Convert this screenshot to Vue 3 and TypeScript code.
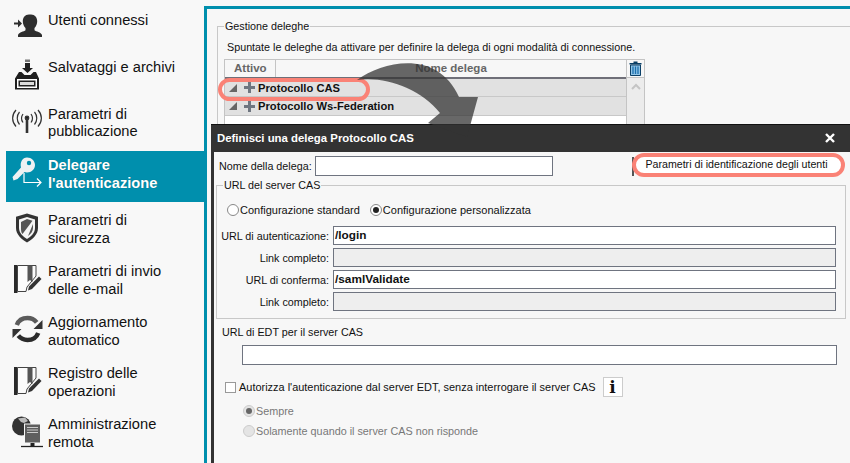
<script setup lang="ts">
interface NavItem { lines: string[]; icon: string; cls: string; active?: boolean }
const items: NavItem[] = [
  { lines: ['Utenti connessi'], icon: 'user', cls: 'first' },
  { lines: ['Salvataggi e archivi'], icon: 'save', cls: 'second' },
  { lines: ['Parametri di', 'pubblicazione'], icon: 'antenna', cls: 'pub' },
  { lines: ['Delegare', "l'autenticazione"], icon: 'key', cls: '', active: true },
  { lines: ['Parametri di', 'sicurezza'], icon: 'shield', cls: 'low' },
  { lines: ['Parametri di invio', 'delle e-mail'], icon: 'book', cls: 'low' },
  { lines: ['Aggiornamento', 'automatico'], icon: 'sync', cls: 'low' },
  { lines: ['Registro delle', 'operazioni'], icon: 'book', cls: 'low' },
  { lines: ['Amministrazione', 'remota'], icon: 'remote', cls: 'low' },
]
</script>

<template>
  <div class="page">
    <aside class="side">
      <div v-for="it in items" :key="it.lines[0] + it.icon" class="nav" :class="[it.cls, { active: it.active }]">
        <svg class="ico" :class="'i-' + it.icon" width="34" height="34" viewBox="0 0 34 34">
          <g v-if="it.icon === 'user'" fill="#2e2e2e">
            <path d="M18 5.500c4 0 6.200 3 6.200 6.800 0 2.800-1.100 5.200-2.700 6.700v2.300c1.500 1.300 6.500 1.900 7.500 4.700v2H5v-2c1-2.800 6-3.400 7.500-4.700V19c-1.600-1.500-2.700-3.900-2.700-6.700 0-3.800 2.200-6.800 6.200-6.800z" transform="translate(1 0)" />
            <path d="M2 13.500h4v-3l4 4-4 4v-3H2z" />
          </g>
          <g v-else-if="it.icon === 'save'" fill="#1f1f1f">
            <rect x="13" y="2.500" width="5" height="2.500" fill="#777" />
            <path d="M13 6h5v5h3l-5.500 5-5.500-5h3z" />
            <path d="M7 15h2.500l3 3h6l3-3H24l3 6.500v11H3v-11z" />
            <rect x="5" y="22" width="20" height="9" fill="#fff" />
            <rect x="6.500" y="23.500" width="17" height="6" fill="#222" />
            <rect x="8" y="25" width="14" height="3" fill="#ddd" />
          </g>
          <g v-else-if="it.icon === 'antenna'" fill="none" stroke="#333" stroke-width="1.200">
            <circle cx="15" cy="14" r="1.800" fill="#222" />
            <path d="M15 14v15" stroke-width="2.600" />
            <path d="M11 10c-1.800 2.500-1.800 6 0 8.500M19 10c1.800 2.500 1.800 6 0 8.500M7.500 8c-3 3.500-3 9 0 12.500M22.500 8c3 3.500 3 9 0 12.500M4 6c-4.500 5-4.500 11.500 0 16.500M26 6c4.500 5 4.500 11.500 0 16.500" />
          </g>
          <g v-else-if="it.icon === 'key'">
            <path d="M15 2.500c4.500 0 8 3.500 8 7.500 0 4.200-3.500 7.500-8 7.500-1 0-1.800-.1-2.500-.4L5.500 24l-4 1.500L.5 22 9 12.500C7.800 7 10.500 2.500 15 2.500z" fill="#eef1f2" />
            <circle cx="17" cy="8" r="2.200" fill="#008fad" />
            <path d="M12 18v9.500h17M25 23.500l4 4-4 4" fill="none" stroke="#fff" stroke-width="1.200" />
          </g>
          <g v-else-if="it.icon === 'shield'">
            <path d="M15 2.500l11 3.300V17c0 7-6 11.500-11 14.500C10 28.500 4 24 4 17V5.800z" fill="#333" />
            <path d="M15 6l8 2.400V17c0 5-4 8.500-8 11-4-2.500-8-6-8-11V8.400z" fill="#f4f4f4" />
            <path d="M15 8l5.500 1.800L10.500 23C9 21.500 9 19 9 17v-6zM21 13v4c0 3-2 6-5 8z" fill="#555" />
          </g>
          <g v-else-if="it.icon === 'book'">
            <rect x="2" y="3" width="3.500" height="28" fill="#2a2a2a" />
            <path d="M5.500 3.500H24V14L15 25l-1 4.500H5.500z" fill="#fbfbfb" stroke="#444" />
            <path d="M15.500 3.500h5V20l-2.500-2-2.500 2z" fill="#555" />
            <path d="M27 14.500l2.500 2.500-9.500 10-4 1.500 1-4z" fill="#333" />
          </g>
          <g v-else-if="it.icon === 'sync'">
            <path d="M4.800 13C6.500 8.500 10.700 6 15.500 6c3.800 0 7 1.600 9.200 4.300" fill="none" stroke="#5b5b5b" stroke-width="4.500" />
            <path d="M26.200 21C24.500 25.500 20.300 28 15.500 28c-3.800 0-7-1.600-9.200-4.300" fill="none" stroke="#2b2b2b" stroke-width="4.500" />
            <path d="M30.500 8v9h-9zM.5 26v-9h9z" fill="#333" />
          </g>
          <g v-else-if="it.icon === 'remote'">
            <circle cx="9.500" cy="11" r="9.500" fill="#333" />
            <path d="M6 3.500l7-1 3 3.500-4 2-3-1z" fill="#bbb" />
            <rect x="12.500" y="9" width="16" height="19" fill="#5f5f5f" stroke="#f8f8f8" />
            <path d="M15 12.500h11M15 15h11M15 17.500h11" stroke="#ccc" />
            <rect x="18.500" y="28" width="4" height="3" fill="#222" />
            <path d="M9 31.500h22" stroke="#222" stroke-width="1.300" />
          </g>
        </svg>
        <div class="label"><div v-for="l in it.lines" :key="l">{{ l }}</div></div>
      </div>
    </aside>

    <main class="main">
      <fieldset class="deleghe">
        <legend>Gestione deleghe</legend>
        <p class="hint">Spuntate le deleghe da attivare per definire la delega di ogni modalità di connessione.</p>
        <div class="tablewrap">
          <div class="table">
            <div class="thead"><span class="th1">Attivo</span><span class="th2">Nome delega</span></div>
            <div class="row"><span class="tri"></span><span class="plus"></span><b>Protocollo CAS</b></div>
            <div class="row tall"><span class="tri"></span><span class="plus"></span><b>Protocollo Ws-Federation</b></div>
          </div>
          <div class="scroll">
            <div class="trash">
              <svg width="13" height="15" viewBox="0 0 13 15"><path d="M4.500.5h4v1.500h4v1.500H.5V2h4z" fill="#0a3f66" /><path d="M1.500 4h10v10.500h-10z" fill="#8fc3e6" stroke="#0a3f66" /><path d="M4 5.500v7.500M6.500 5.500v7.500M9 5.500v7.500" stroke="#1a6fae" stroke-width="1.300" /></svg>
            </div>
            <div class="up"><svg width="10" height="7" viewBox="0 0 10 7"><path d="M1 6l4-4 4 4" fill="none" stroke="#c4c4c4" stroke-width="2" /></svg></div>
          </div>
        </div>
      </fieldset>
    </main>

    <div class="oval oval1"></div>

    <section class="modal">
      <header class="mhead">
        <span>Definisci una delega Protocollo CAS</span>
        <svg width="10" height="10" viewBox="0 0 10 10"><path d="M1 1l8 8M9 1l-8 8" stroke="#fff" stroke-width="2.400" /></svg>
      </header>
      <div class="mbody">
        <div class="namerow">
          <label>Nome della delega:</label>
          <span class="input nameinput"></span>
          <span class="spacer"></span>
          <span class="btnedge"></span>
          <span class="btn">Parametri di identificazione degli utenti</span>
        </div>
        <fieldset class="cas">
          <legend>URL del server CAS</legend>
          <div class="radios">
            <span class="radio"></span><span class="rlabel">Configurazione standard</span>
            <span class="radio on"></span><span class="rlabel">Configurazione personalizzata</span>
          </div>
          <div class="grid">
            <label>URL di autenticazione:</label><span class="input val">/login</span>
            <label>Link completo:</label><span class="input off"></span>
            <label>URL di conferma:</label><span class="input val">/samlValidate</span>
            <label>Link completo:</label><span class="input off"></span>
          </div>
        </fieldset>
        <div class="edt">URL di EDT per il server CAS</div>
        <span class="input edtinput"></span>
        <div class="auth">
          <span class="check"></span>
          <span class="authlabel">Autorizza l'autenticazione dal server EDT, senza interrogare il server CAS</span>
          <span class="info">i</span>
        </div>
        <div class="sub first-sub"><span class="radio dis on"></span><span>Sempre</span></div>
        <div class="sub"><span class="radio dis"></span><span>Solamente quando il server CAS non risponde</span></div>
      </div>
    </section>

    <svg class="arrow" width="130" height="80" viewBox="0 0 130 80">
      <path d="M7 20C35 0 88 -10 109 37L128 37 117 77 78 63 90 53C70 28 35 16 7 20z" fill="#333" fill-opacity=".74" />
    </svg>
  </div>
</template>

<style>
html, body { margin: 0; padding: 0; background: #f8f8f8; overflow: hidden; }
</style>

<style scoped>
.page { position: relative; display: flex; width: 850px; height: 463px; overflow: hidden; background: #f8f8f8; font-family: "Liberation Sans", Arial, sans-serif; color: #111; font-size: 10.75px; }
.side { width: 204px; flex: none; padding-left: 6px; box-sizing: border-box; }
.nav { display: flex; height: 51px; box-sizing: border-box; padding-top: 5px; align-items: flex-start; font-size: 14.67px; line-height: 17.5px; }
.nav.first { height: 47px; padding-top: 12px; }
.nav.second { height: 53px; padding-top: 12px; }
.nav.pub { padding-top: 5.5px; }
.nav.low { padding-top: 10px; }
.nav.active { background: #008fad; color: #fff; font-weight: 700; padding-top: 6px; text-shadow: 0 0 1px rgba(0,0,0,.3); }
.ico { flex: none; margin: -1px 2px 0 6px; }
.ico.i-user { margin-top: -3px; }
.ico.i-save { margin-top: -2.5px; }
.ico.i-antenna { margin-top: -1.5px; }
.ico.i-key { margin-top: -2px; }
.ico.i-sync { margin-top: -2px; }
.main { flex: 1; margin-top: 6px; border-left: 3px solid #008fad; border-top: 3px solid #008fad; background: #f7f7f7; padding: 10px 0 0 10px; box-sizing: border-box; min-width: 0; }
fieldset { margin: 0; border: 1px solid #c8c8c8; min-width: 0; }
legend { padding: 0 1px; margin-left: 6px; line-height: 14px; }
.deleghe { width: 640px; padding: 0; height: 200px; box-sizing: border-box; border-right: 0; }
.hint { margin: 7px 0 0 9px; line-height: 14px; white-space: nowrap; }
.tablewrap { display: flex; margin: 5px 0 0 6px; width: 421px; }
.table { flex: 1; border: 1px solid #c4c4c4; border-bottom: 0; height: 70px; background: #fff; }
.thead { height: 17px; display: flex; border-bottom: 2px solid #6f6f78; color: #666; font-weight: 700; line-height: 17px; font-size: 11.5px; background: #f7f7f7; }
.th1 { width: 51px; box-sizing: border-box; padding-left: 9px; border-right: 1px solid #c4c4c4; }
.th2 { flex: 1; text-align: center; }
.row { height: 17px; display: flex; align-items: center; background: #e1e1e1; border-bottom: 1px solid #c8c8c8; font-size: 11.2px; color: #111; }
.row.tall { height: 18px; }
.tri { width: 0; height: 0; margin-left: 4px; border-style: solid; border-width: 0 0 8px 8px; border-color: transparent transparent #666 transparent; }
.plus { width: 11px; height: 11px; margin: 0 3px 0 7px; background: linear-gradient(#6f7680,#6f7680) center/11px 3px no-repeat, linear-gradient(#6f7680,#6f7680) center/3px 11px no-repeat; }
.scroll { width: 17px; flex: none; border: 1px solid #c4c4c4; border-left: 0; height: 70px; background: #ececec; }
.trash { height: 17px; background: #f7f7f7; border-bottom: 1px solid #c4c4c4; display: flex; align-items: center; justify-content: center; }
.up { display: flex; justify-content: center; padding-top: 5px; }
.arrow { position: absolute; left: 350px; top: 60px; }
.oval { position: absolute; border: 4px solid #fa8276; box-sizing: border-box; }
.oval1 { left: 218px; top: 78px; width: 152px; height: 23px; border-radius: 12px; }
.modal { position: absolute; left: 211px; top: 124px; width: 639px; height: 339px; background: #333; box-sizing: border-box; padding: 0 0 0 3px; border-top: 1px solid #111; display: flex; flex-direction: column; }
.mhead { height: 27px; box-sizing: border-box; padding: 0 15px 2px 3px; flex: none; display: flex; align-items: center; justify-content: space-between; color: #fff; font-weight: 700; font-size: 11.4px; }
.mbody { flex: 1; background: #f7f7f7; padding: 4px 0 0 2px; }
.namerow { display: flex; align-items: center; height: 20px; }
.namerow label { margin-left: 3px; width: 96px; white-space: nowrap; }
.input { display: block; box-sizing: border-box; height: 20px; border: 1px solid #6f7480; background: #fff; }
.nameinput { width: 238px; }
.spacer { flex: 1; }
.btnedge { width: 2px; height: 19px; margin-right: -2px; background: #555; }
.btn { position: relative; box-sizing: border-box; height: 24px; width: 213px; margin: 0 5px 2px 0; padding-right: 4px; background: #fff; border: 4px solid #fa8276; border-radius: 12px; line-height: 15px; text-align: center; white-space: nowrap; font-size: 10.65px; }
.cas { margin: 2px 0 0 0; padding: 0; width: 630px; height: 141px; box-sizing: border-box; }
.radios { display: flex; align-items: center; margin: 10px 0 0 10px; height: 16px; font-size: 11px; }
.radio { box-sizing: border-box; display: inline-block; position: relative; width: 12px; height: 12px; border-radius: 50%; border: 1px solid #888; background: #fff; margin-right: 1px; flex: none; }
.radio.on::after { content: ""; position: absolute; left: 2px; top: 2px; width: 6px; height: 6px; border-radius: 50%; background: #222; }
.rlabel { margin-right: 10px; }
.grid { display: grid; grid-template-columns: 116px 503px; grid-auto-rows: 19px; row-gap: 3px; margin-top: 8px; align-items: center; }
.grid label { text-align: right; padding-right: 4px; white-space: nowrap; }
.val { font-weight: 700; padding-left: 1px; line-height: 17px; font-size: 11.8px; height: 19px; }
.off { background: #eee; height: 19px; }
.edt { margin: 6px 0 0 6px; line-height: 14px; }
.edtinput { margin: 6px 0 0 26px; width: 595px; }
.auth { display: flex; align-items: center; margin: 12px 0 0 9px; height: 20px; font-size: 10.95px; }
.check { box-sizing: border-box; width: 11px; height: 11px; border: 1px solid #999; background: #fff; flex: none; margin-right: 3px; }
.authlabel { white-space: nowrap; }
.info { margin-left: 7px; width: 20px; height: 20px; box-sizing: border-box; border: 1px solid #ccc; background: #fff; font: 700 17px/18px "DejaVu Serif", serif; text-align: center; }
.sub { display: flex; align-items: center; margin-left: 27px; height: 20px; color: #777; font-size: 10.8px; }
.first-sub { margin-top: 4px; }
.radio.dis { background: #e4e4e4; border-color: #ccc; }
.radio.dis.on::after { background: #666; }
</style>
